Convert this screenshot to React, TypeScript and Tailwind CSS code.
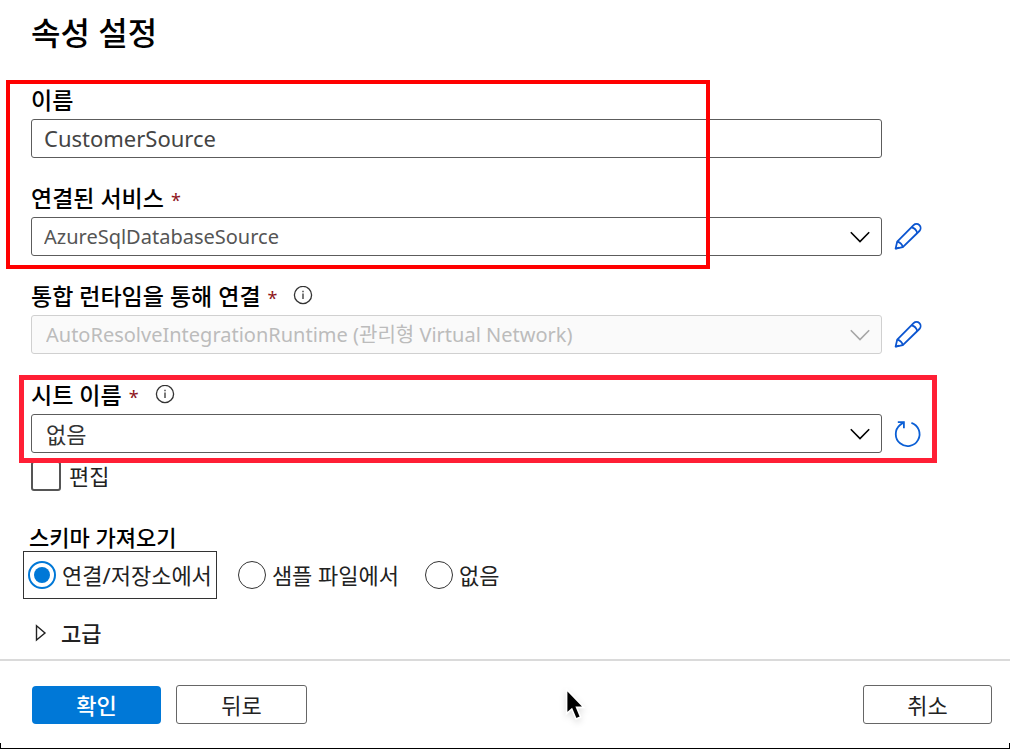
import type { ReactNode } from "react";

function Chevron({ className }: { className: string }) {
  return (
    <svg viewBox="0 0 20 12" className={`pointer-events-none absolute right-3 top-1/2 h-3 w-5 -translate-y-1/2 ${className}`} fill="none" stroke="currentColor" strokeWidth="1.6" aria-hidden="true">
      <path d="M0.8 1.2 10 10.5 19.2 1.2" />
    </svg>
  );
}

function Pencil() {
  return (
    <svg viewBox="0 0 28 28" className="size-7" fill="none" stroke="#0b55d0" strokeWidth="1.8" strokeLinejoin="round" aria-hidden="true">
      <path d="M1.6 25.6 3.2 18.6 19.6 2.2a4 4 0 0 1 5.8 5.8L8.8 24.2Z" />
      <path d="M17.6 4.4q4.4 1 5.6 5.6M3.2 18.6q4.6 1 5.6 5.6M1.6 25.6l3.6-.9" />
    </svg>
  );
}

function Refresh() {
  return (
    <svg viewBox="0 0 28 28" className="size-7" fill="none" stroke="#0b5fd5" strokeWidth="1.8" aria-hidden="true">
      <path d="M17.4 2.8A11.9 11.9 0 1 1 6 5Q7.6 3.6 9.8 2.4" />
      <path d="M3.8 2.2H9.9V8.2" />
    </svg>
  );
}

function Info() {
  return (
    <svg viewBox="0 0 20 20" className="ml-4 size-5" fill="none" stroke="#333" strokeWidth="1.3" aria-hidden="true">
      <circle cx="10" cy="9" r="8.6" />
      <path d="M10 7.6V13M10 4.8v1.5" />
    </svg>
  );
}

type LabelProps = { htmlFor: string; required?: boolean; info?: boolean; children: ReactNode };

function FieldLabel({ htmlFor, required, info, children }: LabelProps) {
  return (
    <div className="flex h-[29px] items-start">
      <label htmlFor={htmlFor} className="text-[23px] font-medium leading-5 text-black">
        {children}
        {required && <span className="ml-[7px] text-[18px] font-normal text-[#8e1520]">*</span>}
      </label>
      {info && <Info />}
    </div>
  );
}

type SelectProps = {
  id: string;
  label: string;
  value: string;
  info?: boolean;
  disabled?: boolean;
  textClass: string;
  action: string;
  icon: ReactNode;
};

function SelectField({ id, label, value, info, disabled, textClass, action, icon }: SelectProps) {
  return (
    <div>
      <FieldLabel htmlFor={id} required info={info}>
        {label}
      </FieldLabel>
      <div className="flex items-center gap-3">
        <div className="relative flex-1">
          <select
            id={id}
            disabled={disabled}
            className={`block h-[39px] w-full appearance-none rounded-[3px] border border-[#5c5c5c] bg-white pr-10 opacity-100 disabled:border-[#d0d0d0] disabled:bg-[#fafafa] disabled:text-[#bcbcbc] ${textClass}`}
          >
            <option>{value}</option>
          </select>
          <Chevron className={disabled ? "text-[#a6a6a6]" : "text-black"} />
        </div>
        <button type="button" aria-label={action}>
          {icon}
        </button>
      </div>
    </div>
  );
}

function Choice({ label, checked }: { label: string; checked?: boolean }) {
  return (
    <label className={`flex h-12 items-center gap-1.5 border px-1 ${checked ? "border-[#333]" : "border-transparent"}`}>
      <input
        type="radio"
        name="schema"
        defaultChecked={checked}
        className="grid size-7 appearance-none place-items-center rounded-full border border-[#333] checked:border-2 checked:border-[#0078d7] before:size-4 before:rounded-full checked:before:bg-[#0078d7]"
      />
      {label}
    </label>
  );
}

export default function App() {
  return (
    <div className="relative flex min-h-screen flex-col bg-white font-['Noto_Sans','Noto_Sans_CJK_KR',sans-serif] text-[22px] leading-7 text-[#222]">
      <main className="flex-1 pl-[31px] pr-[88px] pt-3">
        <h1 className="text-[32px] font-medium leading-[42px] text-black">속성 설정</h1>

        <div className="relative mt-9 flex flex-col gap-[30px]">
          <div className="pr-10">
            <FieldLabel htmlFor="name">이름</FieldLabel>
            <input
              id="name"
              defaultValue="CustomerSource"
              className="block h-[39px] w-full rounded-[3px] border border-[#5c5c5c] px-3 pb-0.5 text-[22px] text-[#444]"
            />
          </div>
          <SelectField id="service" label="연결된 서비스" value="AzureSqlDatabaseSource" textClass="pl-3 text-[20px] text-[#555]" action="연결된 서비스 편집" icon={<Pencil />} />
          <div className="pointer-events-none absolute -left-[25px] -top-[10px] h-[189px] w-[704px] border-4 border-[#ff0000]" />
        </div>

        <div className="mt-[30px]">
          <SelectField id="runtime" label="통합 런타임을 통해 연결" value="AutoResolveIntegrationRuntime (관리형 Virtual Network)" textClass="pl-3.5 text-[20px]" info disabled action="런타임 편집" icon={<Pencil />} />
        </div>

        <div className="relative mt-[31px]">
          <SelectField id="sheet" label="시트 이름" value="없음" textClass="pl-3.5 text-[22px] text-[#333]" info action="새로 고침" icon={<Refresh />} />
          <div className="pointer-events-none absolute -left-3 -right-[15px] -top-[10px] z-10 h-[88px] border-[5px] border-[#ff1f35]" />
        </div>

        <label className="mt-2 flex w-fit items-center gap-2">
          <input type="checkbox" className="size-[30px] appearance-none rounded-[3px] border-2 border-[#555] bg-white" />
          편집
        </label>

        <fieldset className="-ml-2 mt-8">
          <legend className="pl-1.5 font-medium text-black">스키마 가져오기</legend>
          <div className="flex gap-4">
            <Choice label="연결/저장소에서" checked />
            <Choice label="샘플 파일에서" />
            <Choice label="없음" />
          </div>
        </fieldset>

        <button type="button" className="mt-5 flex items-center gap-3.5 pl-1 font-medium">
          <svg viewBox="0 0 12 18" className="h-[18px] w-3" fill="none" stroke="#222" strokeWidth="1.4" aria-hidden="true">
            <path d="M1.5 1.8V16L10 9Z" />
          </svg>
          고급
        </button>
      </main>

      <footer className="flex items-center gap-[15px] border-t-2 border-[#dadada] pb-[25px] pl-8 pr-[18px] pt-6">
        <button type="button" className="h-[38px] w-[129px] rounded-sm bg-[#0078d7] font-medium text-white">확인</button>
        <button type="button" className="h-[39px] w-[131px] rounded-[3px] border border-[#666]">뒤로</button>
        <button type="button" className="ml-auto h-[39px] w-[129px] rounded-[3px] border border-[#666]">취소</button>
      </footer>

      <div className="pointer-events-none absolute inset-x-0 bottom-0 h-1.5 border-x border-b border-black" />
      <svg viewBox="0 0 24 34" className="pointer-events-none absolute bottom-[27px] left-[564px] h-[34px] w-6 drop-shadow-md" aria-hidden="true">
        <path d="M2.6 1.5V25.5L7.8 21 12 31 16.6 29 12.6 19.4H20Z" fill="#000" stroke="#fff" strokeWidth="1.6" />
      </svg>
    </div>
  );
}
